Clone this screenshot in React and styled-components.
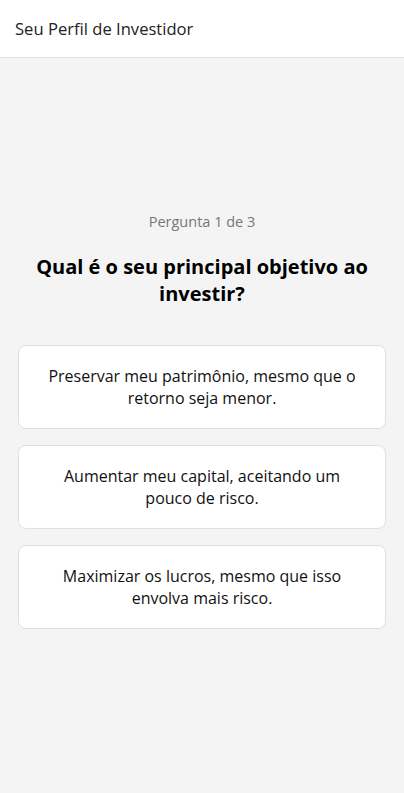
import React from "react";
import styled, { createGlobalStyle } from "styled-components";

const GlobalStyle = createGlobalStyle`
  html, body {
    margin: 0;
    padding: 0;
    background: #f4f4f4;
  }
  body {
    font-family: "Segoe UI", "Open Sans", "Noto Sans", sans-serif;
    color: #111;
  }
  * {
    box-sizing: border-box;
  }
`;

const Page = styled.div`
  min-height: 793px;
  display: flex;
  flex-direction: column;
  background: #f4f4f4;
`;

const Header = styled.header`
  height: 58px;
  flex-shrink: 0;
  display: flex;
  align-items: center;
  padding: 0 15px;
  background: #fff;
  border-bottom: 1px solid #e0e0e0;
  font-size: 16.6px;
  color: #222;
`;

const Main = styled.main`
  flex: 1;
  display: flex;
  flex-direction: column;
  justify-content: center;
  padding: 0 18px 10px;
`;

const Counter = styled.p`
  margin: 0 0 22px;
  text-align: center;
  font-size: 14.5px;
  color: #777;
`;

const Question = styled.h2`
  margin: 0 0 38px;
  padding: 0 16px;
  text-align: center;
  font-size: 20px;
  line-height: 27px;
  font-weight: 700;
  color: #000;
`;

const Options = styled.div`
  display: flex;
  flex-direction: column;
  gap: 16px;
`;

const Option = styled.button`
  display: block;
  width: 100%;
  min-height: 84px;
  padding: 19px 26px;
  background: #fff;
  border: 1px solid #e0e0e0;
  border-radius: 8px;
  font-family: inherit;
  font-size: 16px;
  line-height: 22px;
  color: #111;
  text-align: center;
  cursor: pointer;
`;

const options = [
  "Preservar meu patrimônio, mesmo que o retorno seja menor.",
  "Aumentar meu capital, aceitando um pouco de risco.",
  "Maximizar os lucros, mesmo que isso envolva mais risco.",
];

export default function App() {
  return (
    <>
      <GlobalStyle />
      <Page>
        <Header>Seu Perfil de Investidor</Header>
        <Main>
          <Counter>Pergunta 1 de 3</Counter>
          <Question>Qual é o seu principal objetivo ao investir?</Question>
          <Options>
            {options.map((text) => (
              <Option key={text}>{text}</Option>
            ))}
          </Options>
        </Main>
      </Page>
    </>
  );
}
